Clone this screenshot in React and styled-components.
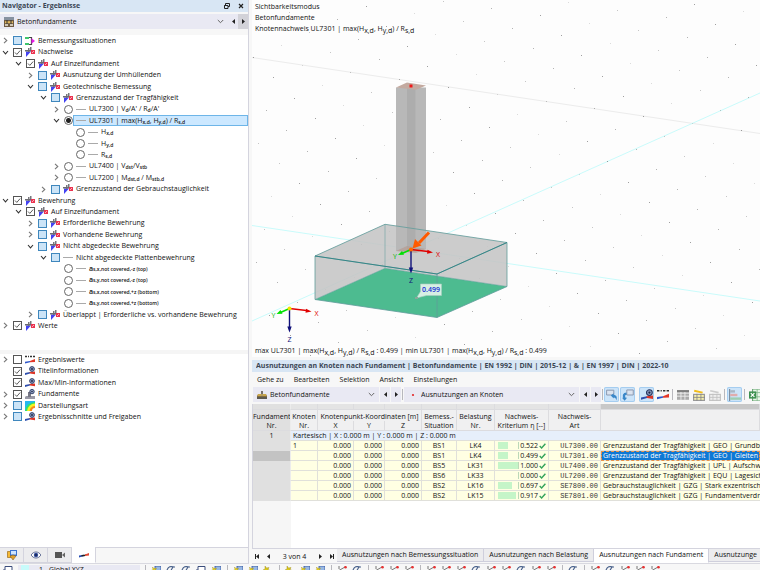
import React from "react";
import styled, { createGlobalStyle, css } from "styled-components";

const Global = createGlobalStyle`
  *, *::before, *::after { box-sizing: border-box; }
  html, body, #root { height: 100%; margin: 0; }
  body {
    background: #f7f7f7; color: #111; overflow: hidden;
    font-family: "Open Sans", "Noto Sans", sans-serif; font-size: 7px; line-height: 10px;
  }
  button, input, select { font: inherit; color: inherit; margin: 0; padding: 0; border: 0; background: none; }
`;

const blue = "#d8e6f4";
const lilac = "#e9e9f3";

const Window = styled.div`display: flex; flex-direction: column; height: 100vh;`;
const Main = styled.main`display: flex; flex: 1; min-height: 0; gap: 3px;`;
const Navigator = styled.aside`
  display: flex; flex-direction: column; flex: 0 0 249px; min-width: 0;
  border-right: 1px solid #d4d4de; border-bottom: 1px solid #d9d9e0;
`;
const Workspace = styled.section`display: flex; flex-direction: column; flex: 1; min-width: 0;`;

const TitleBar = styled.header`
  display: flex; align-items: center; gap: 4px; flex: none; height: 12px;
  padding: 0 2px; background: ${blue}; color: #3c4654;
  h2 { margin: 0; flex: 1; font-size: 7px; font-weight: 700; line-height: 12px; white-space: nowrap; overflow: hidden; }
`;
const TitleButton = styled.button`display: grid; place-items: center; width: 10px; height: 10px;`;

const ComboRow = styled.div`
  display: flex; align-items: center; flex: none; height: 15px; margin-top: 2px; margin-bottom: 6px;
  background: ${lilac};
`;
const Combo = styled.label`
  display: flex; align-items: center; flex: ${(p) => (p.$width ? "0 0 " + p.$width + "px" : "1")};
  min-width: 0; height: 100%; padding: 0 4px; gap: 3px; background: ${lilac};
  select { appearance: none; flex: 1; min-width: 0; outline: 0; height: 12px; line-height: 12px; }
`;
const StepButton = styled.button`
  display: grid; place-items: center; width: 10px; height: 100%; flex: none;
  background: ${(p) => (p.$pressed ? "#d2d2d8" : lilac)};
`;

const Tree = styled.ul`
  list-style: none; margin: 0; padding: 0; background: #fff; overflow: hidden;
  flex: ${(p) => (p.$fill ? "1" : "0 0 auto")};
  padding-bottom: ${(p) => (p.$fill ? 0 : 19)}px;
`;
const Divider = styled.div`flex: none; height: 4px; background: #f5f5f5;`;
const TreeItem = styled.li`
  display: flex; align-items: center; height: 11px; gap: 3px;
  padding-left: ${(p) => 1 + [0, 13, 25, 38, 51, 63][p.$level]}px;
  &:nth-child(5n + 2), &:nth-child(5n + 4) { height: 12px; }
`;
const Expander = styled.button`display: grid; place-items: center; width: 9px; height: 9px; flex: none;`;
const Gap = styled.span`width: 9px; flex: none;`;
const Mark = styled.input`
  appearance: none; flex: none; width: 9px; height: 9px; background: #fff; border: 1px solid #555;
  ${(p) => p.$mixed && css`background: #cce4f7; border-color: #3f87bd;`}
  ${(p) => p.type === "radio" && css`border-radius: 50%; border-color: #666;`}
  &[type="radio"]:checked { background: radial-gradient(circle, #222 0 2px, #fff 3px); }
  &[type="checkbox"]:checked {
    background: #fff url("data:image/svg+xml,%3Csvg xmlns='http://www.w3.org/2000/svg' viewBox='0 0 7 7'%3E%3Cpath d='M1 3.5 2.8 5.4 6.2 1.5' fill='none' stroke='%23333' stroke-width='.8'/%3E%3C/svg%3E") center / 7px 7px no-repeat;
  }
`;
const ItemLabel = styled.label`
  display: flex; align-items: center; gap: 3px; height: 11px; white-space: nowrap; min-width: 0;
  sub { font-size: 5px; line-height: 0; vertical-align: -1px; font-weight: 600; }
  ${(p) => p.$line && css`margin-left: -3px; padding-left: 3px; flex: 1;`}
  ${(p) => p.$selected && css`background: #cce8ff; box-shadow: inset 0 0 0 1px #6db5e8;`}
`;
const LineKey = styled.span`width: 10px; height: 1px; flex: none; background: #aaa;`;
const Small = styled.span`font-size: 5px; font-weight: 600; b { font-size: 7px; font-weight: 600; }`;

const PanelTabs = styled.nav`
  display: flex; flex: none; height: 16px; border-top: 1px solid #d4d4de; background: #f7f7f7;
`;
const PanelTab = styled.button`
  display: grid; place-items: center; width: 24px; border-right: 1px solid #d4d4de; border-bottom: 1px solid #d4d4de;
  background: ${(p) => (p.$active ? "#fff" : "#ececee")};
  ${(p) => p.$active && css`margin-top: -1px; border-bottom-color: #fff;`}
`;

const Viewport = styled.div`
  display: grid; grid-template: minmax(0, 1fr) / minmax(0, 1fr); flex: 1; min-height: 0; background: #fdfdfd; overflow: hidden;
  border-bottom: 3px solid #f7f7f7;
  > * { grid-area: 1 / 1; }
`;
const Scene = styled.svg`width: 100%; height: 100%; display: block;`;
const Caption = styled.p`
  margin: 0; padding: 1px 3px; z-index: 1; white-space: nowrap; color: #111; line-height: 11px; pointer-events: none;
  align-self: ${(p) => (p.$bottom ? "end" : "start")};
  sub { font-size: 7px; line-height: 0; vertical-align: -2px; }
`;

const TablePane = styled.section`
  display: flex; flex-direction: column; flex: 0 0 204px; border-bottom: 1px solid #d9d9e0;
  > header { padding-left: 4px; }
`;
const Menu = styled.nav`
  display: flex; align-items: center; flex: none; gap: 10px; height: 15px; padding: 0 5px;
`;
const Toolbar = styled.div`
  display: flex; align-items: center; flex: none; height: 15px; gap: 1px; padding-left: 1px; margin-bottom: 2px; overflow: hidden;
`;
const ToolButton = styled.button`
  display: grid; place-items: center; flex: none; width: 15px; height: 15px; border-radius: 2px;
  ${(p) => p.$on && css`background: #cce4f9; box-shadow: inset 0 0 0 1px #a5cdf0;`}
`;
const Separator = styled.span`flex: none; width: 1px; height: 11px; margin: 0 ${(p) => (p.$tight ? 0 : 1)}px; background: #b8b8bd;`;
const ToolGap = styled.span`flex: none; width: 2px;`;

const GridArea = styled.div`
  flex: 1; min-height: 0; overflow: hidden; border-left: 1px solid #d4d4de;
  background: linear-gradient(90deg, #f6f6f6 38px, #fff 38px);
`;
const Grid = styled.table`
  width: 100%; table-layout: fixed; border-collapse: separate; border-spacing: 0; line-height: 9px;
  th, td { padding: 0 2px; border-right: 1px solid #e0e0da; border-bottom: 1px solid #e0e0da; white-space: nowrap; overflow: hidden; font-weight: 400; }
  td:last-child { padding-right: 0; border-right: 0; }
  thead th { background: #f0f0f1; border-color: #dcdcdf; text-align: center; padding: 0; height: 10px; }
  thead tr:first-child th { height: 6px; background: #e4e4e4; }
  thead tr:first-child th:last-child { background: #c8c8c8; }
  thead tr:nth-child(2) th { border-bottom: 0; padding-top: 1px; height: 11px; }
  tbody tr { height: 10px; }
  tbody th, thead tr th:first-child { background: #e0e0e0; border-right-color: #ececec; }
`;
const Cell = styled.td`
  text-align: ${(p) => p.$align || "left"};
  background: ${(p) => (p.$selected ? "#0f78d4" : "#ffffe3")};
  color: ${(p) => (p.$selected ? "#fff" : "inherit")};
  ${(p) => p.$mono && css`font-family: "Liberation Mono", monospace; font-size: 7px; line-height: 8px; color: #333;`}
  ${(p) => p.$selected && css`outline: 1px dashed #e8934a; outline-offset: -1px;`}
`;
const RowHead = styled.th`&& { background: ${(p) => (p.$current ? "#c3c3c3" : "#e0e0e0")}; border-bottom-color: ${(p) => (p.$current ? "#c3c3c3" : "#e0e0e0")}; }`;
const GroupCell = styled.td`background: #e6effb;`;
const Ratio = styled.div`display: flex; align-items: center; justify-content: space-between; height: 9px;`;
const Track = styled.span`display: block; width: 21px; height: 7px; margin-left: 1px; border-right: 1px solid #bcd8b8;`;
const Fill = styled.span`display: block; height: 7px; background: #c5f5c8;`;
const Value = styled.span`display: flex; align-items: center; gap: 1px;`;

const SheetBar = styled.nav`
  display: flex; flex: none; height: 15px; border-top: 1px solid #d4d4de; overflow: hidden; align-items: stretch;
  > span { flex: none; width: 41px; text-align: center; line-height: 15px; white-space: nowrap; }
`;
const SheetTab = styled.button`
  flex: none; padding: 0 5px; margin-bottom: 1px; white-space: nowrap; border-right: 1px solid #cfcfdc; border-bottom: 1px solid #cfcfdc;
  background: ${(p) => (p.$active ? "#fff" : "#ececee")};
  ${(p) => p.$active && css`margin-top: -1px; margin-bottom: 0; border-bottom-color: #fff;`}
`;
const PagerButton = styled.button`display: grid; place-items: center; width: 11px; flex: none;`;

const BottomBar = styled.footer`
  display: flex; flex: none; height: 6px; overflow: hidden; align-items: flex-start; padding: 1px 0 0 3px; gap: 4px;
  background: #f7f7f7;
`;
const LoadCase = styled.button`
  display: flex; gap: 10px; flex: 0 0 122px; height: 12px; padding-left: 3px; background: ${lilac}; line-height: 10px; white-space: nowrap;
  svg { flex: none; }
`;
const IconButton = styled.button`flex: none; width: 11px; height: 12px; svg { display: block; }`;

function Chevron({ open }) {
  return (
    <svg width="7" height="7" viewBox="0 0 7 7" fill="none" stroke={open ? "#333" : "#777"} strokeWidth="1.1">
      <path d={open ? "M1 2 3.5 4.8 6 2" : "M2 .8 4.8 3.5 2 6.2"} />
    </svg>
  );
}
function Arrow({ dir, bar }) {
  return (
    <svg width="7" height="7" viewBox="0 0 7 7" fill="#222" transform={dir === "left" ? "rotate(180)" : undefined}>
      <path d="M2 1 5 3.5 2 6Z" />
      {bar && <path d="M5 1h1v5H5z" />}
    </svg>
  );
}
function DropMark() {
  return <svg width="7" height="5" viewBox="0 0 7 5" fill="none" stroke="#666"><path d="M.8 1 3.5 3.7 6.2 1" /></svg>;
}

const glyphs = {
  check: (
    <>
      <path d="M1 4.5V10l5-5.500Z" fill="#4343f2" />
      <path d="M3 1h1.500v4H3zM5 0h1.500v4H5z" fill="#77777c" />
      <path d="M0 3h6v1.500H0z" fill="#6c6c72" />
      <path d="M6 3h4v4H6z" fill="#ea3350" /><path d="m7 6 2-2" stroke="#ffd0d0" strokeWidth=".8" />
    </>
  ),
  situations: (
    <>
      <path d="M0 1h4v2H0zM0 7h4v2H0z" fill="#3fc56d" />
      <path d="M4 1.500h2.500v7H4" fill="none" stroke="#444" strokeWidth="1.2" />
      <path d="M6.500 2.300 10 5 6.500 7.700Z" fill="#e81be8" />
    </>
  ),
  values: (
    <>
      <path d="M0 1.5h2M3 1.5h1M5 1.5h2M8 1.5h2" stroke="#333" strokeWidth="1.3" />
      <path d="M0 8.5V6.7L5 6v1.2Z" fill="#2d55c8" /><path d="m5 6 5-2v3L5 7.2Z" fill="#e33828" />
    </>
  ),
  info: (
    <>
      <path d="M0 9V7l5-1v1.4Z" fill="#2d4fae" /><path d="m4.5 6 5.5-.5v2.8L5 7.4Z" fill="#dc3426" />
      <circle cx="7" cy="3" r="2.4" fill="#8c9bc2" stroke="#26355e" strokeWidth=".9" /><circle cx="7" cy="3" r=".9" fill="#18233e" />
    </>
  ),
  footing: (
    <>
      <path d="M1 7h9v3H0V8Z" fill="#9999a6" /><path d="M3 3h3v5H3z" fill="#777785" />
      <circle cx="7" cy="2.6" r="2.2" fill="#9caacd" stroke="#26355e" strokeWidth=".9" /><circle cx="7" cy="2.6" r=".8" fill="#18233e" />
    </>
  ),
  contour: (
    <>
      <path d="M0 0h10v10H0z" fill="#25b7f0" /><path d="M0 10A10 10 0 0 1 10 1v9Z" fill="#2fe36b" />
      <path d="M2 10a8 8 0 0 1 8-7.4V10Z" fill="#f6f320" /><path d="M4.5 10A5.5 5.5 0 0 1 10 5v5Z" fill="#f98a1a" /><path d="M7 10a3 3 0 0 1 3-3v3Z" fill="#fff" />
    </>
  ),
  concrete: (
    <>
      <path d="M0 0h10v10H0z" fill="#6d5a44" /><path d="M0 0h10v3H0z" fill="#8792a0" />
      <path d="M1 4.2h8v2H1z" fill="#e2b85e" /><path d="M1 7h3v2H1zM6 7h3v2H6z" fill="#cfc6b5" /><path d="M3 3v4M7 3v4" stroke="#333" />
    </>
  ),
  base: (
    <>
      <path d="M1 4h8l1 2v3H0V6Z" fill="#a68335" /><path d="M0 6.5h10V9H0z" fill="#5d594f" /><path d="M4 1h2v5H4z" fill="#77716a" />
      <path d="M1 5h8" stroke="#edc75c" />
    </>
  ),
  node: <circle cx="5" cy="5" r="1.1" fill="#e32626" />,
  pickA: (
    <>
      <path d="M.5 1h6v4h-6z" fill="#dbe3ef" stroke="#8a97ad" strokeWidth=".8" /><path d="m4 5.5 2.4-2v1.4c2.5 0 3 1.8 2.3 4.6C8.2 7.8 8 7 6.4 7v1Z" fill="#3987c9" />
    </>
  ),
  pickB: (
    <>
      <path d="M4 .8h5.4V5H4z" fill="#dbe3ef" stroke="#8a97ad" strokeWidth=".8" /><path d="M3.7 3C.8 3.3.3 5.3 1 7.3H0l2.2 2.5 2-2.5H3C2.3 5.7 2.5 5 3.9 4.8Z" fill="#3987c9" />
    </>
  ),
  table: <><path d="M0 1h10v8H0z" fill="#aaa" /><path d="M0 3.5h10M0 6h10M3.3 2v7M6.6 2v7" stroke="#f2f2f2" strokeWidth=".7" /><path d="M0 1h10v1.4H0z" fill="#777" /></>,
  tableHot: <><path d="M0 4h10v6H0z" fill="#999" /><path d="M1 5h8v4H1z" fill="#f6efab" /><path d="M0 7h10M3.3 4v6M6.6 4v6" stroke="#888" strokeWidth=".7" /><path d="M1 1.5 8 3" stroke="#f1bd19" strokeWidth="1.6" /></>,
  tableCold: <><path d="M0 4h10v6H0z" fill="#c4c4c4" /><path d="M1 5h8v4H1z" fill="#eee" /><path d="M0 7h10M3.3 4v6M6.6 4v6" stroke="#c1c1c1" strokeWidth=".7" /><path d="M1 1.5 8 3" stroke="#ccc" strokeWidth="1.4" /></>,
  bars: <><path d="M.5 0v10" stroke="#7d8ea0" /><path d="M1 1h4v2H1z" fill="#a8b7c5" /><path d="M1 4h6v2H1z" fill="#e0acac" /><path d="M1 7h9v2H1z" fill="#9dceb2" /></>,
  sheet: <><path d="M3 0h7v10H3z" fill="#e9f6e9" stroke="#5c9e67" strokeWidth=".8" /><path d="M3 3h7M3 6.5h7M6.8 0v10" stroke="#7fb98a" strokeWidth=".7" /><path d="M0 2h6v6H0z" fill="#3d9150" /><path d="m1.5 3.4 3 3.2m0-3.2-3 3.2" stroke="#fff" /></>,
  project: <><path d="M.5 1.5h6v6h-6z" fill="#f6ba36" stroke="#9d6d18" strokeWidth=".7" /><path d="M3 0h7v6H3z" fill="#3a72d0" /><path d="M4 1h5v3.5H4z" fill="#cce4ff" /><path d="m3 6 3-1 3 1-3 4Z" fill="#e0a12b" stroke="#75511a" strokeWidth=".5" /></>,
  eye: <><path d="M0 5c2.7-4 7.3-4 10 0-2.7 4-7.3 4-10 0Z" fill="#fff" stroke="#24356b" strokeWidth=".7" /><circle cx="5" cy="5" r="2.2" fill="#344d9b" /><circle cx="5" cy="5" r=".9" fill="#111d43" /></>,
  camera: <><path d="M0 2h7v6H0z" fill="#555" /><path d="m7 5 3-2.6v5.2Z" fill="#666" /></>,
  result: <><path d="M0 7.5V5.500l5-.8v1.2Z" fill="#244bb4" /><path d="m2.500 5 5-.6-2 1.800-3 .300Z" fill="#222" /><path d="m6 4.500 4-1.500v2.500L6 6Z" fill="#e14834" /></>,
  newItem: <><path d="M4 0h6v6H4z" fill="#98b8e3" stroke="#2d4f9b" strokeWidth=".8" /><path d="m1.5 1 1.6 1.7L5.5 2 4.3 4.3 6 6H3.6L2 8V5.7L0 4.6l2-.9Z" fill="#e8d41b" stroke="#a38e12" strokeWidth=".4" /></>,
  member: <><path d="M1 5 8 1M2 0v3" stroke="#777" fill="none" /><circle cx="8.5" cy="1.2" r="1.3" fill="#e53232" /></>,
  dim: <><path d="M1 4c2-5 5-3 8-3M4 6l3-5" stroke="#445d88" fill="none" strokeWidth="1.1" /></>,
  star: <path d="m2 0 1.5 2L6 1.5 5 3.6l3 1.3-4 .5L2 8V5L0 4l2-1Z" fill="#dac91c" stroke="#988714" strokeWidth=".4" />,
  monitor: <path d="M2 .5h7v6H2zM1 3v5h5" fill="#fff" stroke="#3b4d7c" />,
};
function Icon({ name, size = 10 }) {
  return <svg width={size} height={size} viewBox="0 0 10 10" fill="none" aria-hidden="true">{glyphs[name]}</svg>;
}

const HxHy = () => <>max(H<sub>x,d</sub>, H<sub>y,d</sub>) / R<sub>s,d</sub></>;
const covered = (axis, side) => <Small><b>a</b>s,{axis},not covered,{side}</Small>;

// [level, expander, mark, icon, label]
const results = [
  [0, "closed", "mixed", "situations", "Bemessungssituationen"],
  [0, "open", "on", "check", "Nachweise"],
  [1, "open", "on", "check", "Auf Einzelfundament"],
  [2, "closed", "mixed", "check", "Ausnutzung der Umhüllenden"],
  [2, "open", "mixed", "check", "Geotechnische Bemessung"],
  [3, "open", "mixed", "check", "Grenzzustand der Tragfähigkeit"],
  [4, "closed", "radio", "line", <>UL7300 | V<sub>d</sub>/A' / R<sub>d</sub>/A'</>],
  [4, "open", "picked", "line", <>UL7301 | <HxHy /></>],
  [5, "", "radio", "line", <>H<sub>x,d</sub></>],
  [5, "", "radio", "line", <>H<sub>y,d</sub></>],
  [5, "", "radio", "line", <>R<sub>s,d</sub></>],
  [4, "closed", "radio", "line", <>UL7400 | V<sub>dst</sub>/V<sub>stb</sub></>],
  [4, "closed", "radio", "line", <>UL7200 | M<sub>dst,d</sub> / M<sub>stb,d</sub></>],
  [3, "closed", "mixed", "check", "Grenzzustand der Gebrauchstauglichkeit"],
  [0, "open", "on", "check", "Bewehrung"],
  [1, "open", "on", "check", "Auf Einzelfundament"],
  [2, "closed", "mixed", "check", "Erforderliche Bewehrung"],
  [2, "closed", "mixed", "check", "Vorhandene Bewehrung"],
  [2, "open", "mixed", "check", "Nicht abgedeckte Bewehrung"],
  [3, "open", "mixed", "line", "Nicht abgedeckte Plattenbewehrung"],
  [4, "", "radio", "line", covered("x", "-z (top)")],
  [4, "", "radio", "line", covered("y", "-z (top)")],
  [4, "", "radio", "line", covered("x", "+z (bottom)")],
  [4, "", "radio", "line", covered("y", "+z (bottom)")],
  [2, "closed", "mixed", "check", "Überlappt | Erforderliche vs. vorhandene Bewehrung"],
  [0, "closed", "on", "check", "Werte"],
];
const options = [
  [0, "closed", "off", "values", "Ergebniswerte"],
  [0, "", "on", "info", "Titelinformationen"],
  [0, "", "on", "info", "Max/Min-Informationen"],
  [0, "closed", "on", "footing", "Fundamente"],
  [0, "closed", "mixed", "contour", "Darstellungsart"],
  [0, "closed", "mixed", "info", "Ergebnisschnitte und Freigaben"],
];

function TreeList({ items, id, fill }) {
  return (
    <Tree $fill={fill}>
      {items.map(([level, expander, mark, icon, label], i) => {
        const radio = mark === "radio" || mark === "picked";
        const key = `${id}-${i}`;
        return (
          <TreeItem key={key} $level={level}>
            {expander ? (
              <Expander aria-label={expander === "open" ? "Zuklappen" : "Aufklappen"}><Chevron open={expander === "open"} /></Expander>
            ) : <Gap />}
            <Mark id={key} type={radio ? "radio" : "checkbox"} name={radio ? "nachweis" : undefined}
              $mixed={mark === "mixed"} defaultChecked={mark === "on" || mark === "picked"} />
            <ItemLabel htmlFor={key} $line={radio} $selected={mark === "picked"}>
              {icon === "line" ? <LineKey /> : <Icon name={icon} />}
              <span>{label}</span>
            </ItemLabel>
          </TreeItem>
        );
      })}
    </Tree>
  );
}

const dots = [];
for (let a = -14; a < 10; a++) {
  for (let b = -12; b < 22; b++) {
    const x = 692 + a * 48.8 - b * 28.2;
    const y = 123 + a * 7.3 + b * 12.8;
    if (x > 252 && x < 762 && y > 0 && y < 356) {
      dots.push([Math.round(x), Math.round(y), 0.2 + (Math.abs(a * 7 + b * 5) % 4) * 0.12]);
    }
  }
}

function Axes({ x, y, hub }) {
  return (
    <g transform={`translate(${x} ${y})`} fontFamily="Open Sans, sans-serif" fontSize="7" textAnchor="middle">
      <path d="M0 0-9 4" stroke="#00e000" strokeWidth="1.6" /><path d="m-13 5.500 4-4 2 3.800Z" fill="#00e000" />
      <path d="m0 0 17 2" stroke="#e00000" strokeWidth="1.4" /><path d="m22 3-6 1.300.5-4Z" fill="#e00000" />
      <path d="M0 0v19" stroke="#10107a" strokeWidth="1.4" /><path d="m0 24-2.200-6h4.400Z" fill="#10107a" />
      <circle r="2" fill={hub} />
      <text x="-16" y="9" fill="#00b400">Y</text>
      <text x="27" y="7" fill="#e00000">X</text>
      <text x="0" y="33" fill="#10107a">Z</text>
    </g>
  );
}

function Model() {
  return (
    <Scene viewBox="252 0 508 357" preserveAspectRatio="xMinYMin slice" role="img" aria-label="Fundamentmodell">
      <path d="m252 57.500 508 76" stroke="#ececec" />
      <path d="m252 321 508-228M252 225.500l508 75.500" stroke="#c9fbfb" />
      {dots.map(([x, y, o], i) => <path key={i} d={`M${x} ${y}h1v1h-1z`} fill="#555" opacity={o} />)}
      <path d="m315 256 70-31.700 122 18.200v44l-122-18.200-70 31.200Z" fill="#c6c6c6" opacity=".8" />
      <path d="m315 299.500 70-31.200 122 18.200-70 31Z" fill="#4dbb90" />
      <path d="m315 256 70-31.700 122 18.200v44l-122-18.200-70 31.200Z" fill="#c6c6c6" opacity=".45" />
      <path d="M396 87.500h30V249l-10 3-20-1Z" fill="#b8b8b8" />
      <path d="M407 88h8.500v163H407z" fill="#adadad" />
      <path d="m396 87.500 11-5 19 3-10 4.200Z" fill="#c3aaa0" />
      <path d="m396 251 11-5 19 3-10 4Z" fill="#b59b91" opacity=".7" />
      <path d="M409.500 84.500h3v3h-3z" fill="#f01818" />
      <g stroke="#5f9c9a" strokeWidth=".8" fill="none">
        <path d="M385 224.300v44l-70 31.200M385 268.300l122 18.200" opacity=".65" />
        <path d="m315 256 70-31.700 122 18.200-70 31.500ZM315 256v43.500l122 18 70-31v-44M437 274v43.500" />
        <path d="m315 256 122 18 70-31.500" stroke="#257e80" />
      </g>
      <Axes x={411} y={249.500} hub="#ff6a00" />
      <path d="m429 232.500-10 10.500" stroke="#ff5a00" strokeWidth="3" />
      <path d="m412.500 248.500 2.500-9.500 6.500 6.500Z" fill="#ff5a00" />
      <path d="M420.500 284h21v11.500h-15L416.500 298l4-6.500Z" fill="#d7efe3" stroke="#a8cfc0" strokeWidth=".6" />
      <path d="M415 297h3v2h-3z" fill="#8aa79b" />
      <text x="431" y="291.500" textAnchor="middle" fontSize="7" fontWeight="600" fontFamily="Open Sans, sans-serif" fill="#1630d4">0.499</text>
      <Axes x={289.5} y={308.5} hub="#f1e500" />
    </Scene>
  );
}

const rows = [
  ["1", "BS1", "LK4", 0.522, "UL7300.00", "Grenzzustand der Tragfähigkeit | GEO | Grundbr"],
  ["", "BS1", "LK4", 0.499, "UL7301.00", "Grenzzustand der Tragfähigkeit | GEO | Gleiten n"],
  ["", "BS5", "LK31", 1, "UL7400.00", "Grenzzustand der Tragfähigkeit | UPL | Aufschwi"],
  ["", "BS6", "LK33", 0, "UL7200.00", "Grenzzustand der Tragfähigkeit | EQU | Lagesich"],
  ["", "BS2", "LK16", 0.697, "SE7800.00", "Gebrauchstauglichkeit | GZG | Stark exzentrische"],
  ["", "BS2", "LK15", 0.917, "SE7801.00", "Gebrauchstauglichkeit | GZG | Fundamentverdre"],
];
const columns = [38, 27, 36, 31, 37, 35, 38, 54, 52];

function ResultGrid() {
  return (
    <Grid>
      <colgroup>{columns.map((w, i) => <col key={i} width={w} />)}<col /></colgroup>
      <thead>
        <tr>{[...columns, 0].map((_, i) => <th key={i} />)}</tr>
        <tr>
          <th>Fundament</th><th>Knoten</th><th colSpan={3}>Knotenpunkt-Koordinaten [m]</th><th>Bemess.-</th><th>Belastung</th>
          <th>Nachweis-</th><th>Nachweis-</th><th />
        </tr>
        <tr>
          <th>Nr.</th><th>Nr.</th><th>X</th><th>Y</th><th>Z</th><th>Situation</th><th>Nr.</th><th>Kriterium η [--]</th><th>Art</th><th />
        </tr>
      </thead>
      <tbody>
        <tr><RowHead>1</RowHead><GroupCell colSpan={9}>Kartesisch | X : 0.000 m | Y : 0.000 m | Z : 0.000 m</GroupCell></tr>
        {rows.map(([node, situation, load, ratio, code, text], i) => (
          <tr key={code}>
            <RowHead $current={i === 1} />
            <Cell>{node}</Cell>
            <Cell $align="right">0.000</Cell><Cell $align="right">0.000</Cell><Cell $align="right">0.000</Cell>
            <Cell $align="center">{situation}</Cell><Cell $align="center">{load}</Cell>
            <Cell>
              <Ratio>
                <Track><Fill style={{ width: `${ratio * 100}%` }} /></Track>
                <Value>
                  {ratio.toFixed(3)}
                  <svg width="7" height="6" viewBox="0 0 7 6"><path d="m.7 3 1.900 2L6.400.8" fill="none" stroke="#36a35c" strokeWidth="1.400" /></svg>
                </Value>
              </Ratio>
            </Cell>
            <Cell $mono $align="right">{code}</Cell>
            <Cell $selected={i === 1}>{text}</Cell>
          </tr>
        ))}
      </tbody>
    </Grid>
  );
}

function ComboBox({ icon, value, label, width }) {
  return (
    <Combo $width={width}>
      <Icon name={icon} />
      <select aria-label={label} defaultValue={value}><option>{value}</option></select>
      <DropMark />
    </Combo>
  );
}

const tools = [
  ["pickA", true], ["pickB", true], "gap", ["info", true], ["values"], null,
  ["table"], ["tableHot"], ["tableCold"], null, ["bars", true], null, ["sheet"],
];
const bottomTools = [
  null, "newItem", "dim", "dim", "monitor", "newItem", null, "newItem", "newItem", "star", null, "star", "newItem", "newItem", null,
  "member", "dim", null, "member", "member", "member", null, "member", "member", "member", "dim", "member", "member", "dim", "member",
  "member", null, "dim", null, "member", "dim", "member", "member", "member",
];

export default function App() {
  return (
    <Window>
      <Global />
      <Main>
        <Navigator>
          <TitleBar>
            <h2>Navigator - Ergebnisse</h2>
            <TitleButton aria-label="Andocken">
              <svg width="6" height="6" viewBox="0 0 6 6" fill="none" stroke="#222"><path d="M1.500 2V.5h4v3H4M.5 2.500h3.500v3H.5zM.5 2.500h3.500" /></svg>
            </TitleButton>
            <TitleButton aria-label="Schließen">
              <svg width="6" height="6" viewBox="0 0 6 6" stroke="#222" strokeWidth="1.200"><path d="m1 1 4 4M5 1 1 5" /></svg>
            </TitleButton>
          </TitleBar>
          <ComboRow>
            <ComboBox icon="concrete" value="Betonfundamente" label="Ergebnisse" />
            <StepButton aria-label="Zurück"><Arrow dir="left" /></StepButton>
            <StepButton aria-label="Weiter" $pressed><Arrow /></StepButton>
          </ComboRow>
          <TreeList id="ergebnis" items={results} />
          <Divider />
          <TreeList id="option" items={options} fill />
          <PanelTabs>
            {["project", "eye", "camera", "result"].map((n) => (
              <PanelTab key={n} aria-label={n} $active={n === "result"}><Icon name={n} /></PanelTab>
            ))}
          </PanelTabs>
        </Navigator>
        <Workspace>
          <Viewport>
            <Model />
            <Caption>Sichtbarkeitsmodus<br />Betonfundamente<br />Knotennachweis UL7301 | <HxHy /></Caption>
            <Caption $bottom>max UL7301 | <HxHy /> : 0.499 | min UL7301 | <HxHy /> : 0.499</Caption>
          </Viewport>
          <TablePane>
            <TitleBar><h2>Ausnutzungen an Knoten nach Fundament | Betonfundamente | EN 1992 | DIN | 2015-12 | &amp; | EN 1997 | DIN | 2022-10</h2></TitleBar>
            <Menu>{["Gehe zu", "Bearbeiten", "Selektion", "Ansicht", "Einstellungen"].map((m) => <button key={m}>{m}</button>)}</Menu>
            <Toolbar>
              <ComboBox icon="base" value="Betonfundamente" label="Bemessung" width={126} />
              <StepButton aria-label="Zurück"><Arrow dir="left" /></StepButton>
              <StepButton aria-label="Weiter"><Arrow /></StepButton>
              <Separator $tight />
              <ComboBox icon="node" value="Ausnutzungen an Knoten" label="Tabelle" width={175} />
              <StepButton aria-label="Zurück"><Arrow dir="left" /></StepButton>
              <StepButton aria-label="Weiter"><Arrow /></StepButton>
              <Separator $tight />
              {tools.map((t, i) => {
                if (t === "gap") return <ToolGap key={i} />;
                if (!t) return <Separator key={i} />;
                return <ToolButton key={i} aria-label={t[0]} $on={t[1]}><Icon name={t[0]} size={12} /></ToolButton>;
              })}
            </Toolbar>
            <GridArea><ResultGrid /></GridArea>
            <SheetBar>
              <PagerButton aria-label="Erste"><Arrow dir="left" bar /></PagerButton>
              <PagerButton aria-label="Vorherige"><Arrow dir="left" /></PagerButton>
              <span>3 von 4</span>
              <PagerButton aria-label="Nächste"><Arrow /></PagerButton>
              <PagerButton aria-label="Letzte"><Arrow bar /></PagerButton>
              <SheetTab>Ausnutzungen nach Bemessungssituation</SheetTab>
              <SheetTab>Ausnutzungen nach Belastung</SheetTab>
              <SheetTab $active>Ausnutzungen nach Fundament</SheetTab>
              <SheetTab>Ausnutzunge</SheetTab>
            </SheetBar>
          </TablePane>
        </Workspace>
      </Main>
      <BottomBar>
        <IconButton aria-label="Fenster"><Icon name="monitor" /></IconButton>
        <LoadCase><svg width="8" height="8" aria-hidden="true"><path d="M0 0h8v8H0z" fill="#c8fbfb" /></svg>1 - Global XYZ</LoadCase>
        {bottomTools.map((n, i) => n ? <IconButton key={i} aria-label={n}><Icon name={n} /></IconButton> : <Separator key={i} />)}
      </BottomBar>
    </Window>
  );
}
